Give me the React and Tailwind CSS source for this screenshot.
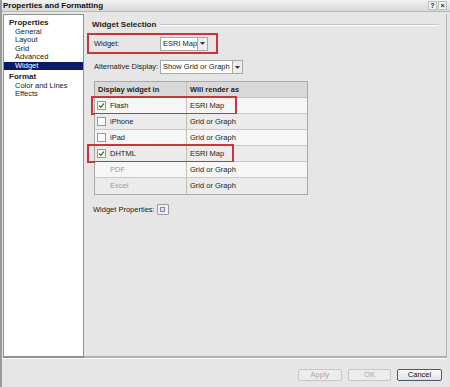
import React from "react";

const font = { fontFamily: '"Liberation Sans", Arial, sans-serif' };

function Check({ checked }) {
  return (
    <div className="w-[9px] h-[9px] border border-[#8c9aa8] bg-white flex items-center justify-center shrink-0">
      {checked && (
        <svg width="7" height="7" viewBox="0 0 7 7">
          <path d="M1 3.5 L2.8 5.3 L6 1.5" stroke="#2f8a2f" strokeWidth="1.4" fill="none" />
        </svg>
      )}
    </div>
  );
}

function Dropdown({ text, w }) {
  return (
    <div className={`flex h-[14px] border border-[#a8a8a8] bg-white ${w}`}>
      <div className="flex-1 flex items-center pl-[2px] text-[7.5px] text-[#222] whitespace-nowrap overflow-hidden">{text}</div>
      <div className="w-[10px] shrink-0 border-l border-[#a8a8a8] bg-[#ececec] flex items-center justify-center">
        <svg width="5" height="3" viewBox="0 0 5 3"><path d="M0 0 H5 L2.5 3 Z" fill="#333" /></svg>
      </div>
    </div>
  );
}

const rows = [
  { name: "Flash", val: "ESRI Map", box: true, checked: true, hl: true },
  { name: "iPhone", val: "Grid or Graph", box: true },
  { name: "iPad", val: "Grid or Graph", box: true },
  { name: "DHTML", val: "ESRI Map", box: true, checked: true, hl: true },
  { name: "PDF", val: "Grid or Graph", disabled: true },
  { name: "Excel", val: "Grid or Graph", disabled: true },
];

export default function App() {
  return (
    <div style={font} className="w-[450px] h-[387px] bg-[#e6e6e6] flex flex-col overflow-hidden border-l-2 border-[#9a9a9a]">
      {/* title bar */}
      <div className="h-[12px] flex items-center justify-between bg-gradient-to-b from-[#f2f2f2] to-[#d9d9d9] border-b border-[#b5b5b5]">
        <div className="pl-[1px] text-[8px] font-bold text-[#111] leading-none">Properties and Formatting</div>
        <div className="flex gap-[1px] pr-[3px]">
          <div className="w-[9px] h-[9px] bg-[#f4f4f4] border border-[#bdbdbd] flex items-center justify-center text-[7px] font-bold leading-none text-[#222]">?</div>
          <div className="w-[9px] h-[9px] bg-[#f4f4f4] border border-[#bdbdbd] flex items-center justify-center text-[7px] font-bold leading-none text-[#222]">×</div>
        </div>
      </div>
      {/* body */}
      <div className="flex mt-[2px] h-[344px]">
        <div className="ml-[1px] w-[81px] bg-white border border-[#8f8f8f] border-b-2 flex flex-col pt-[4px] text-[7.5px] leading-[8.5px] text-[#222]">
          <div className="pl-[5px] font-bold text-[8px]">Properties</div>
          <div className="pl-[11px]">General</div>
          <div className="pl-[11px]">Layout</div>
          <div className="pl-[11px]">Grid</div>
          <div className="pl-[11px]">Advanced</div>
          <div className="pl-[11px] bg-[#0c1a6a] text-white">Widget</div>
          <div className="pl-[5px] font-bold text-[8px] mt-[3px]">Format</div>
          <div className="pl-[11px]">Color and Lines</div>
          <div className="pl-[11px]">Effects</div>
        </div>
        <div className="flex-1 mr-[3px] border-r border-b-2 border-[#b0b0b0] flex flex-col pl-[3px] text-[7.5px] text-[#222]">
          <div className="flex items-center mt-[6px] h-[9px] pl-[5px] gap-[4px]">
            <span className="font-bold text-[8px]">Widget Selection</span>
            <div className="flex-1 mr-[7px] h-[2px] border-t border-[#c4c4c4] border-b border-b-white"></div>
          </div>
          <div className="mt-[4px] w-[131px] h-[21px] border-2 border-[#c8363a] flex items-center pl-[5px]">
            <span className="w-[66px]">Widget:</span>
            <Dropdown text="ESRI Map" w="w-[48px]" />
          </div>
          <div className="mt-[6px] flex items-center pl-[7px]">
            <span className="w-[66px]">Alternative Display:</span>
            <Dropdown text="Show Grid or Graph" w="w-[83px]" />
          </div>
          <div className="mt-[7px] ml-[7px] w-[214px] border border-[#a9a9a9] flex flex-col">
            <div className="flex h-[16px] bg-[#d9d9d9] border-b border-[#c0c0c0] font-bold text-[7.5px]">
              <div className="w-[92px] border-r border-[#c0c0c0] flex items-center pl-[3px]">Display widget in</div>
              <div className="flex-1 flex items-center pl-[3px]">Will render as</div>
            </div>
            {rows.map((r, i) => (
              <div key={r.name} className={`relative flex h-[16px] ${i < rows.length - 1 ? "border-b border-[#c8c8c8]" : ""} ${i % 2 === 0 ? "bg-[#f6f6f6]" : "bg-[#ebebeb]"}`}>
                <div className={`w-[92px] border-r border-[#c0c0c0] flex items-center pl-[2px] gap-[4px] ${r.disabled ? "text-[#9a9a9a]" : ""}`}>
                  {r.box ? <Check checked={r.checked} /> : <div className="w-[9px] shrink-0" />}
                  <span>{r.name}</span>
                </div>
                <div className="flex-1 flex items-center pl-[3px]">{r.val}</div>
                {r.hl && (
                  <div className={`absolute top-[-2px] h-[19px] border-2 border-[#c8363a] ${i === 0 ? "left-[-4px] w-[146px]" : "left-[-8px] w-[147px]"}`}></div>
                )}
              </div>
            ))}
          </div>
          <div className="mt-[9px] ml-[6px] flex items-center gap-[2px]">
            <span>Widget Properties:</span>
            <div className="w-[12px] h-[11px] border border-[#9a9a9a] bg-[#efefef] rounded-[1px] flex items-center justify-center">
              <div className="w-[5px] h-[5px] border border-[#7a8aa0] bg-[#dde4ee]"></div>
            </div>
          </div>
        </div>
      </div>
      {/* footer */}
      <div className="h-[1px] bg-white mr-[3px]"></div>
      <div className="flex justify-end gap-[6px] pr-[8px] mt-[10px] text-[7.5px]">
        <div className="w-[44px] h-[12px] rounded-[2px] border border-[#c6c6c6] bg-[#ececec] text-[#a8a8a8] flex items-center justify-center">Apply</div>
        <div className="w-[43px] h-[12px] rounded-[2px] border border-[#c6c6c6] bg-[#ececec] text-[#a8a8a8] flex items-center justify-center">OK</div>
        <div className="w-[45px] h-[12px] rounded-[2px] border border-[#4a5a6e] bg-gradient-to-b from-[#fafafa] to-[#e2e2e2] text-[#111] flex items-center justify-center">Cancel</div>
      </div>
    </div>
  );
}
